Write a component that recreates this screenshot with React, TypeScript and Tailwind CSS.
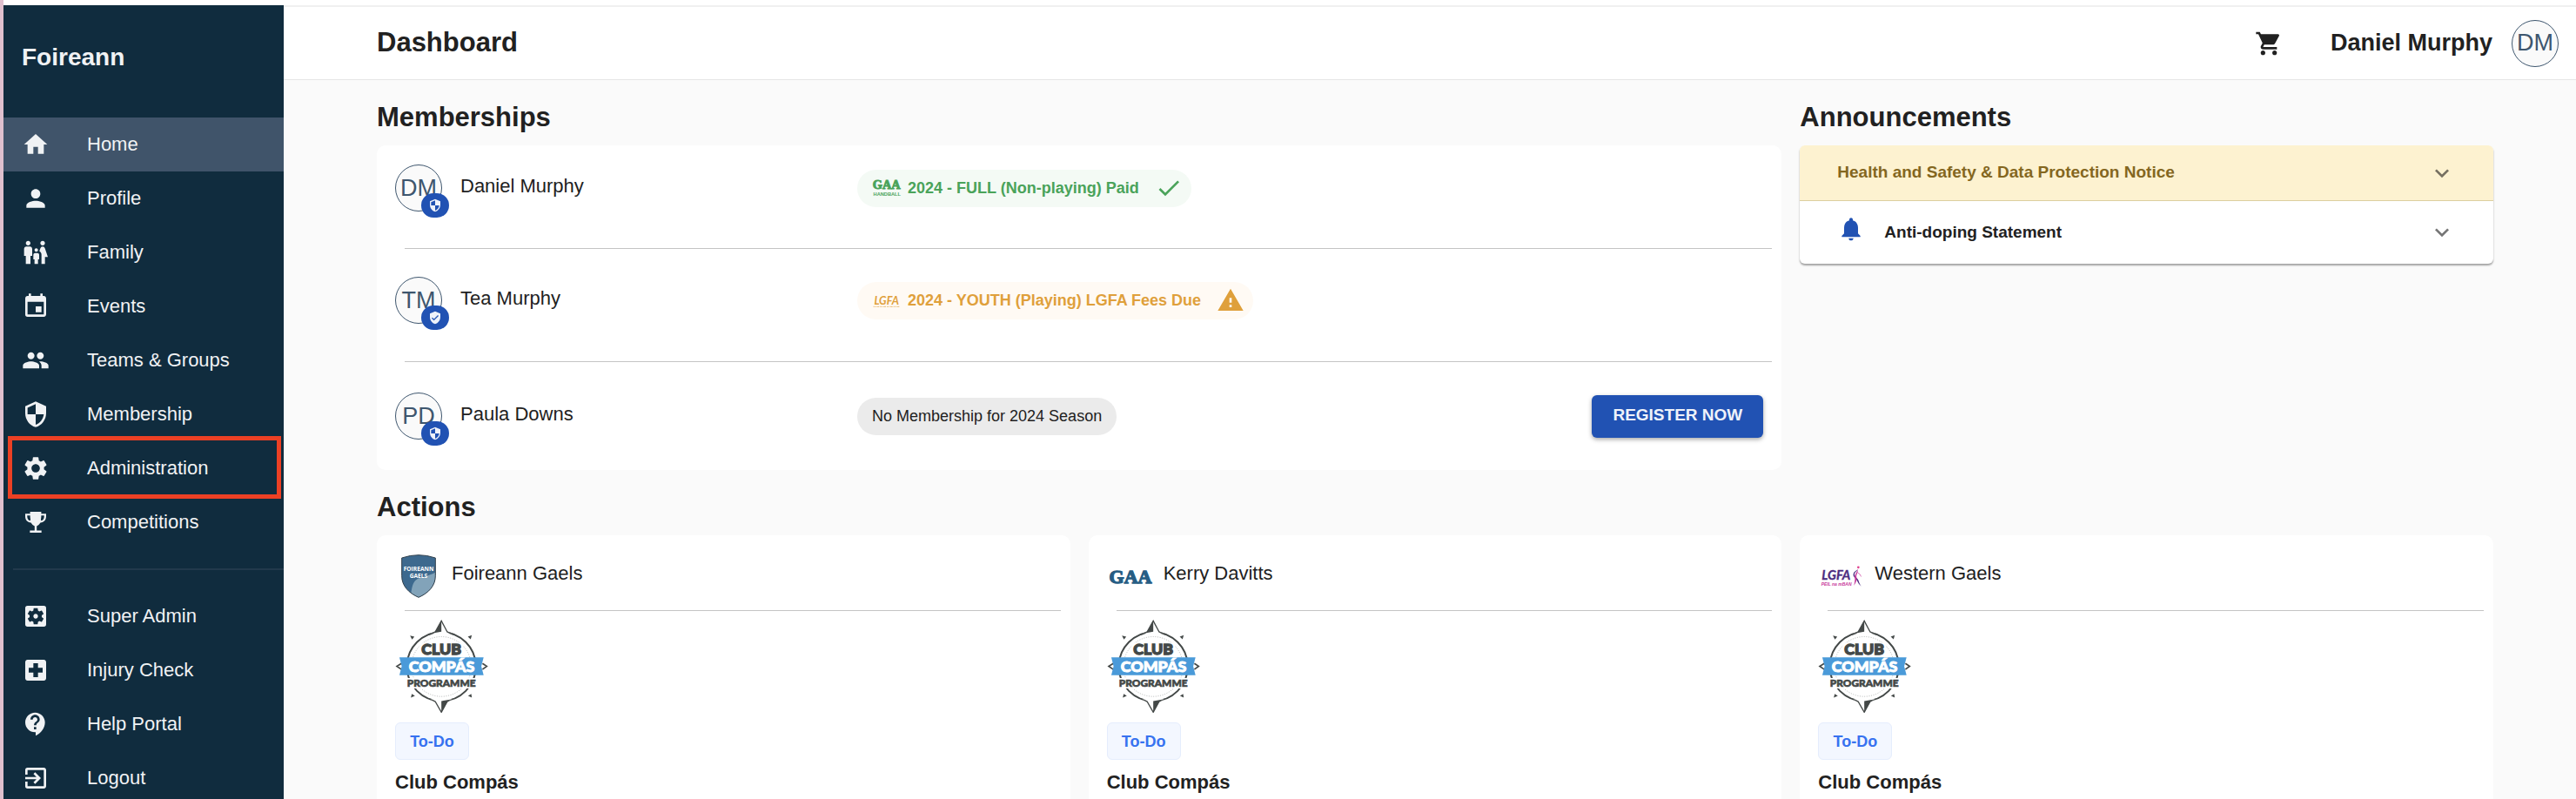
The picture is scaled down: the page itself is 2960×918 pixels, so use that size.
import type { ComponentType, ReactNode } from 'react';
import {
  MdCheck,
  MdContactSupport,
  MdEvent,
  MdExitToApp,
  MdExpandMore,
  MdFamilyRestroom,
  MdHome,
  MdLocalHospital,
  MdNotifications,
  MdPeople,
  MdPerson,
  MdSecurity,
  MdSettings,
  MdSettingsApplications,
  MdShoppingCart,
  MdVerifiedUser,
  MdWarning,
} from 'react-icons/md';

type Icon = ComponentType<{ className?: string }>;

function TrophyIcon({ className }: { className?: string }) {
  return (
    <svg viewBox="0 0 24 24" fill="currentColor" fillRule="evenodd" className={className} aria-hidden="true">
      <path d="M7.2 3h9.6v1.6H21v2.2c0 3.2-1.7 5.3-4.9 5.6-.9 1.5-2 2.5-3.2 2.9v3.9H17V21H7v-1.8h4.1v-3.9c-1.2-.4-2.3-1.4-3.2-2.9C4.7 12.1 3 10 3 6.800V4.600h4.200zM4.700 6.200v.8c0 1.900.8 3.200 2.200 3.600.6-.1.700-.6.600-1.200-.2-1-.300-2-.300-3.200zm12.100 0c0 1.200-.1 2.200-.3 3.200-.1.600 0 1.100.6 1.200 1.400-.4 2.200-1.700 2.200-3.600v-.8z" />
    </svg>
  );
}

const mainNav: { label: string; icon: Icon; active?: boolean; marked?: boolean }[] = [
  { label: 'Home', icon: MdHome, active: true },
  { label: 'Profile', icon: MdPerson },
  { label: 'Family', icon: MdFamilyRestroom },
  { label: 'Events', icon: MdEvent },
  { label: 'Teams & Groups', icon: MdPeople },
  { label: 'Membership', icon: MdSecurity },
  { label: 'Administration', icon: MdSettings, marked: true },
  { label: 'Competitions', icon: TrophyIcon },
];

const adminNav: { label: string; icon: Icon }[] = [
  { label: 'Super Admin', icon: MdSettingsApplications },
  { label: 'Injury Check', icon: MdLocalHospital },
  { label: 'Help Portal', icon: MdContactSupport },
  { label: 'Logout', icon: MdExitToApp },
];

function NavItem({ label, icon: ItemIcon, active, marked }: { label: string; icon: Icon; active?: boolean; marked?: boolean }) {
  return (
    <li className="relative">
      <a href="#" className={`flex h-[62px] items-center gap-[43px] pl-[21px] text-[22px] text-[#f0f2f4] ${active ? 'bg-[#40546a]' : ''}`}>
        <ItemIcon className="size-8 shrink-0" />
        <span className="pb-0.5">{label}</span>
      </a>
      {marked && <span className="pointer-events-none absolute -top-1.5 right-[3px] left-[5px] h-[72px] border-5 border-[#ec4024]" />}
    </li>
  );
}

function Avatar({ initials, children }: { initials: string; children?: ReactNode }) {
  return (
    <span className="relative flex size-[54px] shrink-0 items-center justify-center rounded-full border border-[#3e566e] bg-[#fafafa] text-[27px] leading-none text-[#3e566e]">
      {initials}
      {children}
    </span>
  );
}

function HandballLogo() {
  return (
    <svg viewBox="0 0 96 72" className="h-6 w-8 shrink-0 overflow-visible" fill="#4aa35a" aria-label="GAA Handball">
      <text x="47" y="39" textAnchor="middle" fontFamily="'Liberation Serif', serif" fontWeight="700" fontSize="43" stroke="#4aa35a" strokeWidth="3">GAA</text>
      <text x="49" y="64" textAnchor="middle" fontFamily="'Liberation Sans', sans-serif" fontWeight="700" fontSize="17">HANDBALL</text>
    </svg>
  );
}

function LgfaBadge() {
  return (
    <svg viewBox="0 0 96 72" className="h-6 w-8 shrink-0 overflow-visible" fill="#dfa03b" aria-label="LGFA">
      <text x="47" y="50" textAnchor="middle" fontFamily="Lato, sans-serif" fontStyle="italic" fontWeight="700" fontSize="38">LGFA</text>
      <path d="M2 58h90" stroke="#dfa03b" strokeWidth="4" strokeDasharray="5 2 3 2 8 3" opacity=".55" />
    </svg>
  );
}

const members = [
  {
    name: 'Daniel Murphy',
    initials: 'DM',
    badge: MdSecurity,
    spacing: 'pt-[22px] pb-[42px]',
    status: (
      <span className="inline-flex h-[43px] items-center rounded-full bg-[#f4faf5] pr-2.5 pl-[18px] text-lg font-bold text-[#4aa35a]">
        <HandballLogo />
        <span className="mr-[18px] ml-2">2024 - FULL (Non-playing) Paid</span>
        <MdCheck className="size-8" />
      </span>
    ),
  },
  {
    name: 'Tea Murphy',
    initials: 'TM',
    badge: MdVerifiedUser,
    spacing: 'pt-8 pb-[43px]',
    status: (
      <span className="inline-flex h-[43px] items-center rounded-full bg-[#fffaf4] pr-2.5 pl-[18px] text-lg font-bold text-[#dfa03b]">
        <LgfaBadge />
        <span className="mr-[18px] ml-2">2024 - YOUTH (Playing) LGFA Fees Due</span>
        <MdWarning className="size-8" />
      </span>
    ),
  },
  {
    name: 'Paula Downs',
    initials: 'PD',
    badge: MdSecurity,
    spacing: 'py-[35px]',
    canRegister: true,
    status: <span className="inline-flex h-[43px] items-center rounded-full bg-[#ebebeb] px-[17px] text-lg">No Membership for 2024 Season</span>,
  },
];

function FoireannCrest() {
  return (
    <svg viewBox="0 0 120 150" className="h-[50px] w-10" aria-label="Foireann Gaels crest">
      <path d="M2 12Q60-8 118 12v62c0 36-26 60-58 74C28 134 2 110 2 74z" fill="#3d698e" />
      <path d="M118 62v12c0 36-26 60-58 74-10-4-18-9-26-15 4-26 8-42 24-50 16-7 34-8 60-21z" fill="#82a3b9" />
      <path d="M2 12Q60-8 118 12v62c0 36-26 60-58 74C28 134 2 110 2 74z" fill="none" stroke="#33424e" strokeWidth="3" />
      <g fill="#fff" textAnchor="middle" fontFamily="'Open Sans', sans-serif" fontWeight="700" fontSize="20">
        <text x="60" y="58">FOIREANN</text>
        <text x="60" y="80">GAELS</text>
      </g>
    </svg>
  );
}

function GaaLogo() {
  return (
    <svg viewBox="0 0 144 60" className="h-5 w-12 overflow-visible" fill="#265d84" stroke="#265d84" strokeWidth="4" aria-label="GAA">
      <text x="72" y="53" textAnchor="middle" fontFamily="'Liberation Serif', serif" fontWeight="700" fontSize="66">GAA</text>
    </svg>
  );
}

function LgfaLogo() {
  return (
    <svg viewBox="0 0 144 74" className="h-[25px] w-12 overflow-visible" aria-label="LGFA Peil na mBan">
      <text x="4" y="48" fill="#4b2c80" stroke="#4b2c80" strokeWidth="1" fontFamily="Lato, sans-serif" fontStyle="italic" fontWeight="700" fontSize="44">LGFA</text>
      <text x="2" y="68" fill="#c7379b" fontFamily="'Liberation Sans', sans-serif" fontStyle="italic" fontWeight="700" fontSize="15">PEIL na mBAN</text>
      <circle cx="130" cy="5" r="4" fill="#e0408d" />
      <path d="M129 11c-4 9-13 11-12 20 1 8 11 11 14 20 2 7 4 13 10 20-10-7-12-15-17-23-6-8-12-10-11-19 1-10 10-11 16-18z" fill="#4b2c80" />
      <path d="M128 12c2 12-7 18-4 27 2 8-2 18-9 29 2-11 4-19 3-28-1-11 7-17 10-28z" fill="#c7379b" />
      <path d="M126 22q9 3 14 15" fill="none" stroke="#c7379b" strokeWidth="2" />
    </svg>
  );
}

function CompasLogo() {
  return (
    <svg viewBox="0 0 320 324" className="mt-2.5 size-[107px]" aria-label="Club Compás Programme">
      <circle cx="159" cy="163" r="104" fill="none" stroke="#8d9190" strokeWidth="2" strokeDasharray="3 5" />
      <circle cx="159" cy="163" r="120" fill="none" stroke="#434847" strokeWidth="6" />
      <path d="M159 3l-20 38-20 8 40 4 40-4-20-8z" fill="#fff" />
      <path d="M116 51q12-3 22-9l21-38 20 38q8 4 22 9" fill="none" stroke="#434847" strokeWidth="4" />
      <path d="M159 4v38l-30 5 9-5z" fill="#434847" />
      <path d="M116 276l43 46 43-46-43-6z" fill="#fff" />
      <path d="M116 276q12 3 22 9l21 37 20-37q8-5 22-9" fill="none" stroke="#434847" strokeWidth="4" />
      <path d="M159 322v-39l30-5-9 7z" fill="#434847" />
      <g fill="#434847">
        <path d="M50 55l15 4-8 10z" />
        <path d="M265 54l-14 5 10 9z" />
        <path d="M53 271l3-13 11 7z" />
        <path d="M265 271l-2-13-11 7z" />
      </g>
      <path d="M20 152L4 162l16 11M302 152l15 10-15 11" fill="none" stroke="#434847" strokeWidth="5" />
      <path d="M30 203h256v36H30zM84 80h150v46H84z" fill="#fff" />
      <path d="M13 131h293l-8 31 8 31H13l8-31z" fill="#4a9ad9" />
      <g textAnchor="middle" fontFamily="Lato, sans-serif" fontWeight="900">
        <text x="159" y="122" fontSize="54" fill="#434847" stroke="#434847" strokeWidth="4">CLUB</text>
        <text x="160" y="183" fontSize="54" fill="#fff" stroke="#fff" strokeWidth="3">COMPÁS</text>
        <text x="159" y="234" fontSize="36" fill="#434847" stroke="#434847" strokeWidth="2">PROGRAMME</text>
      </g>
    </svg>
  );
}

const clubs: { name: string; logo: ReactNode }[] = [
  { name: 'Foireann Gaels', logo: <FoireannCrest /> },
  { name: 'Kerry Davitts', logo: <GaaLogo /> },
  { name: 'Western Gaels', logo: <LgfaLogo /> },
];

export default function App() {
  return (
    <div className="flex h-screen overflow-hidden border-l-4 border-[#dfc0ce] bg-white pt-1.5 font-['Liberation_Sans',Arial,sans-serif] text-[#212121]">
      <aside className="w-[322px] shrink-0 bg-[#102c3e]">
        <div className="mb-2.5 flex h-[119px] items-center pl-[21px] text-[28px] font-bold text-[#f0f2f4]">Foireann</div>
        <nav>
          <ul>
            {mainNav.map((item) => (
              <NavItem key={item.label} {...item} />
            ))}
          </ul>
          <hr className="my-[22px] ml-[11px] border-t-2 border-[#22394c]" />
          <ul>
            {adminNav.map((item) => (
              <NavItem key={item.label} {...item} />
            ))}
          </ul>
        </nav>
      </aside>

      <div className="min-w-0 flex-1 bg-[#fafafa]">
        <header className="flex h-[86px] items-center border-t-2 border-b border-t-[#f0f0f0] border-b-[#e6e6e6] bg-white pr-5 pl-[107px]">
          <h1 className="mr-auto text-[31px] font-bold">Dashboard</h1>
          <button type="button" aria-label="Cart" className="mr-[55px]">
            <MdShoppingCart className="size-8" />
          </button>
          <span className="mr-[22px] text-[27px] font-bold">Daniel Murphy</span>
          <Avatar initials="DM" />
        </header>

        <main className="grid grid-cols-3 gap-x-[21px] pr-[95px] pl-[107px]">
          <section className="col-span-2 pt-[23px]">
            <h2 className="mb-3 text-[31px] leading-10 font-bold">Memberships</h2>
            <ul className="rounded-[10px] bg-white">
              {members.map((m, i) => (
                <li key={m.name}>
                  {i > 0 && <hr className="mr-[11px] ml-8 border-[#c4c4c4]" />}
                  <div className={`grid grid-cols-[531px_1fr_auto] items-center px-[21px] ${m.spacing}`}>
                    <div className="flex items-center gap-[21px]">
                      <Avatar initials={m.initials}>
                        <span className="absolute top-8 left-[29px] flex h-7 w-8 items-center justify-center rounded-full bg-[#2152b3] text-[#eef2fa]">
                          <m.badge className="size-4" />
                        </span>
                      </Avatar>
                      <span className="pb-1.5 text-[22px]">{m.name}</span>
                    </div>
                    <div className="flex">{m.status}</div>
                    {m.canRegister && (
                      <button type="button" className="-my-1 h-[49px] w-[197px] rounded-md bg-[#2152b3] pb-0.5 text-[19px] font-bold text-[#eef2fa] shadow-[0_2px_5px_rgba(0,0,0,0.35)]">
                        REGISTER NOW
                      </button>
                    )}
                  </div>
                </li>
              ))}
            </ul>
          </section>

          <section className="pt-[23px]">
            <h2 className="mb-3 text-[31px] leading-10 font-bold">Announcements</h2>
            <div className="overflow-hidden rounded-md bg-white text-[19px] font-bold shadow-[0_2px_2px_rgba(0,0,0,0.35)]">
              <button type="button" aria-expanded="false" className="flex h-16 w-full items-center border-b border-[#dccfa0] bg-[#fdf2d0] px-[43px] text-[#84671f]">
                Health and Safety &amp; Data Protection Notice
                <MdExpandMore className="ml-auto size-8 text-[#756f60]" />
              </button>
              <button type="button" aria-expanded="false" className="flex h-[72px] w-full items-center px-[43px]">
                <MdNotifications className="mr-[22px] mb-2 size-8 text-[#2152b3]" />
                Anti-doping Statement
                <MdExpandMore className="ml-auto size-8 text-[#757575]" />
              </button>
            </div>
          </section>

          <h2 className="col-span-3 mt-[23px] mb-3 text-[31px] leading-10 font-bold">Actions</h2>
          {clubs.map((club) => (
            <article key={club.name} className="rounded-[10px] bg-white pb-10">
              <div className="flex h-[86px] items-center gap-[11px] px-[21px]">
                <span className="flex w-[54px] shrink-0 justify-center pt-2">{club.logo}</span>
                <h3 className="text-[22px]">{club.name}</h3>
              </div>
              <hr className="mr-[11px] ml-8 border-[#c4c4c4]" />
              <div className="px-[21px]">
                <CompasLogo />
                <span className="mt-[11px] flex h-[43px] w-[85px] items-center justify-center rounded-md border border-[#e5edfd] bg-[#f3f7ff] text-lg font-bold text-[#3772f0]">
                  To-Do
                </span>
                <p className="mt-3 text-[22px] leading-7 font-bold">Club Compás</p>
              </div>
            </article>
          ))}
        </main>
      </div>
    </div>
  );
}
